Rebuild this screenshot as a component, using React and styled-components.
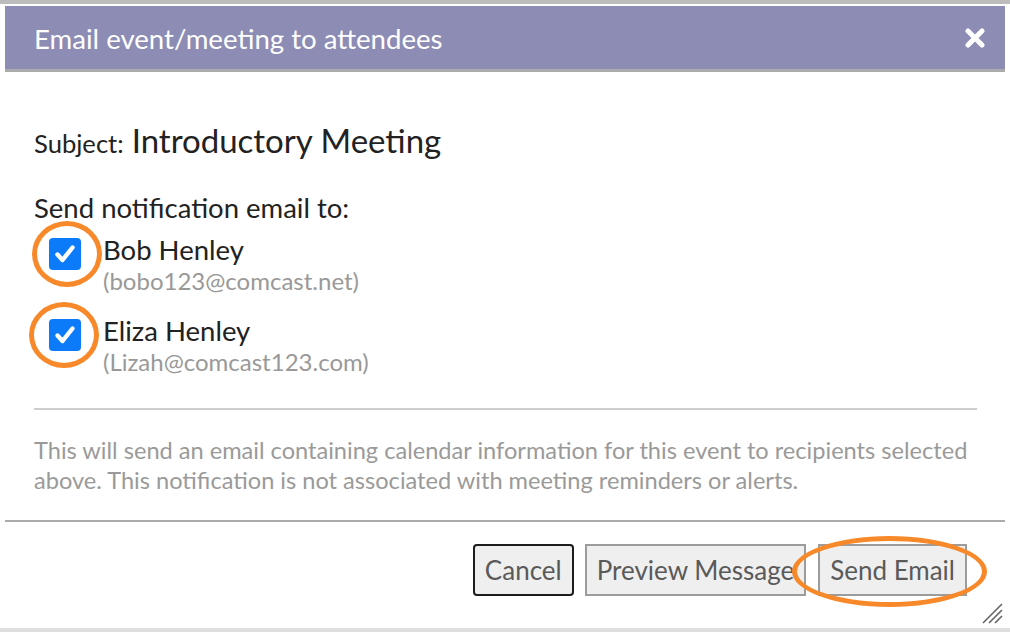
import React from "react";
import styled, { createGlobalStyle } from "styled-components";

const GlobalStyle = createGlobalStyle`
	html, body {
		margin: 0;
		padding: 0;
		background: #fff;
		font-family: Lato, "Open Sans", sans-serif;
	}
`;

const recipients = [
	{ name: "Bob Henley", email: "bobo123@comcast.net", ring: { left: -17, top: -17 } },
	{ name: "Eliza Henley", email: "Lizah@comcast123.com", ring: { left: -20, top: -17 } },
];

function CloseIcon() {
	return (
		<svg width="20" height="20" viewBox="0 0 20 20">
			<path
				d="M3 3 L17 17 M17 3 L3 17"
				stroke="#fff"
				strokeWidth="5"
				strokeLinecap="round"
			/>
		</svg>
	);
}

function Checkbox({ ring }) {
	return (
		<CheckWrap>
			<Box>
				<svg width="24" height="24" viewBox="0 0 24 24">
					<path
						d="M4.5 12.5 L9.5 18 L19.5 5.5"
						fill="none"
						stroke="#fff"
						strokeWidth="4.4"
						strokeLinecap="round"
						strokeLinejoin="round"
					/>
				</svg>
			</Box>
			<Ring style={{ left: ring.left, top: ring.top }} />
		</CheckWrap>
	);
}

function App() {
	return (
		<>
			<GlobalStyle />
			<TopStrip />
			<Dialog>
				<Header>
					<Title>Email event/meeting to attendees</Title>
					<CloseButton>
						<CloseIcon />
					</CloseButton>
				</Header>
				<Body>
					<SubjectRow>
						<SubjectLabel>Subject:</SubjectLabel>
						<SubjectText>Introductory Meeting</SubjectText>
					</SubjectRow>
					<SendLabel>Send notification email to:</SendLabel>
					<RecipientList>
						{recipients.map((r) => (
							<Recipient key={r.email}>
								<Checkbox ring={r.ring} />
								<RecipientText>
									<Name>{r.name}</Name>
									<Email>({r.email})</Email>
								</RecipientText>
							</Recipient>
						))}
					</RecipientList>
					<Divider />
					<Notice>
						This will send an email containing calendar information for this event to recipients selected
						above. This notification is not associated with meeting reminders or alerts.
					</Notice>
				</Body>
				<Footer>
					<Button $dark>Cancel</Button>
					<Button>Preview Message</Button>
					<SendWrap>
						<Button>Send Email</Button>
						<SendRing />
					</SendWrap>
					<Grip>
						<svg width="22" height="22" viewBox="0 0 22 22">
							<path
								d="M2 21 L21 2 M8 21 L21 8 M14 21 L21 14"
								stroke="#666"
								strokeWidth="1.6"
							/>
						</svg>
					</Grip>
				</Footer>
			</Dialog>
			<BottomStrip />
		</>
	);
}

export default App;

const TopStrip = styled.div`
	height: 4px;
	background: #bcbcbc;
`;

const BottomStrip = styled.div`
	height: 4px;
	background: #dedede;
`;

const Dialog = styled.div`
	margin: 2px 5px 0;
	width: 1000px;
	height: 622px;
	display: flex;
	flex-direction: column;
`;

const Header = styled.div`
	height: 66px;
	background: #8c8cb4;
	border-bottom: 3px solid #ababab;
	display: flex;
	align-items: center;
	justify-content: space-between;
	padding: 3px 20px 0 29px;
	box-sizing: border-box;
	flex-shrink: 0;
`;

const Title = styled.div`
	color: #fff;
	font-size: 27.6px;
	margin-top: -2px;
`;

const CloseButton = styled.div`
	display: flex;
	align-items: center;
	margin-top: -3px;
`;

const Body = styled.div`
	padding: 48px 28px 25px 29px;
	border-bottom: 2px solid #ababab;
`;

const SubjectRow = styled.div`
	display: flex;
	align-items: baseline;
	gap: 8px;
	line-height: 40px;
	color: #222;
`;

const SubjectLabel = styled.span`
	font-size: 25.6px;
`;

const SubjectText = styled.span`
	font-size: 33px;
`;

const SendLabel = styled.div`
	margin-top: 29px;
	font-size: 27.5px;
	line-height: 32px;
	color: #222;
`;

const RecipientList = styled.div`
	margin-top: 11px;
	display: flex;
	flex-direction: column;
	gap: 19px;
`;

const Recipient = styled.div`
	display: flex;
	align-items: flex-start;
`;

const CheckWrap = styled.div`
	position: relative;
	margin: 3px 22px 0 15px;
	width: 32px;
	height: 32px;
`;

const Box = styled.div`
	width: 32px;
	height: 32px;
	border-radius: 4px;
	background: #0b7bfa;
	display: flex;
	align-items: center;
	justify-content: center;
`;

const Ring = styled.div`
	position: absolute;
	width: 70px;
	height: 66px;
	box-sizing: border-box;
	border: 5px solid #f7892b;
	border-radius: 50%;
`;

const RecipientText = styled.div`
	display: flex;
	flex-direction: column;
`;

const Name = styled.div`
	font-size: 27.5px;
	line-height: 30px;
	color: #222;
`;

const Email = styled.div`
	font-size: 24px;
	line-height: 32px;
	color: #999;
`;

const Divider = styled.div`
	margin-top: 30px;
	height: 2px;
	background: #cdcdcd;
`;

const Notice = styled.div`
	margin-top: 25px;
	font-size: 23.6px;
	line-height: 30px;
	color: #9a9a9a;
`;

const Footer = styled.div`
	position: relative;
	flex: 1;
	display: flex;
	justify-content: flex-end;
	align-items: flex-start;
	gap: 11px;
	padding: 22px 38px 0 0;
`;

const Button = styled.div`
	height: 52px;
	box-sizing: border-box;
	padding: 0 10px;
	display: flex;
	align-items: center;
	background: #efefef;
	border: 2px solid ${(p) => (p.$dark ? "#1c1c1c" : "#9c9c9c")};
	border-radius: ${(p) => (p.$dark ? "4px" : "0")};
	color: #5a5a5a;
	font-size: 26px;
`;

const SendWrap = styled.div`
	position: relative;
	margin-left: 1px;
`;

const SendRing = styled.div`
	position: absolute;
	left: -26px;
	top: -8px;
	width: 195px;
	height: 71px;
	box-sizing: border-box;
	border: 5px solid #f7892b;
	border-radius: 50%;
`;

const Grip = styled.div`
	position: absolute;
	right: 2px;
	bottom: 4px;
	display: flex;
`;
